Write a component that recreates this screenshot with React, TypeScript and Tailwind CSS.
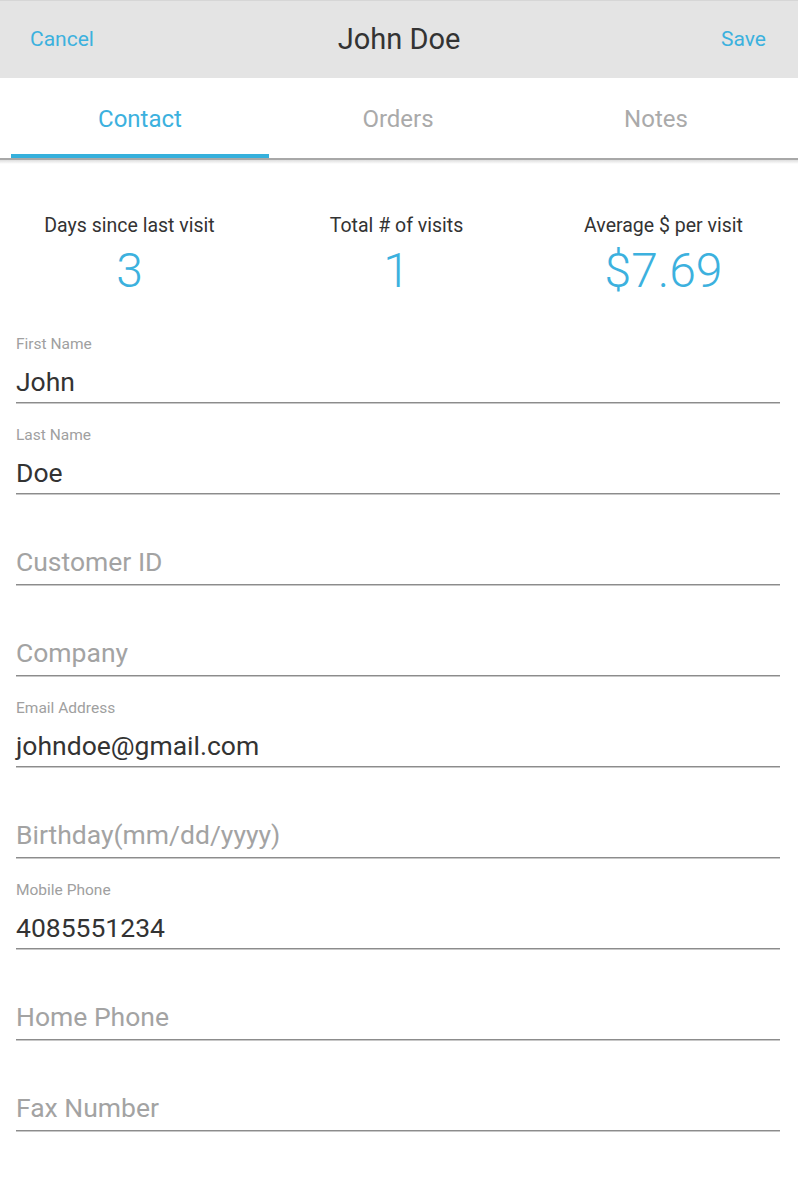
import React from "react";

const fields: { label: string; value?: string }[] = [
  { label: "First Name", value: "John" },
  { label: "Last Name", value: "Doe" },
  { label: "Customer ID" },
  { label: "Company" },
  { label: "Email Address", value: "johndoe@gmail.com" },
  { label: "Birthday(mm/dd/yyyy)" },
  { label: "Mobile Phone", value: "4085551234" },
  { label: "Home Phone" },
  { label: "Fax Number" },
];

function Field({ label, value }: { label: string; value?: string }) {
  return (
    <div className="h-[91px] flex flex-col justify-end">
      {value ? (
        <>
          <div className="text-[15.5px] leading-[18px] text-[#a0a0a0]">{label}</div>
          <div className="text-[26.5px] leading-[32px] text-[#333333] mt-[13px] mb-[4px]">{value}</div>
        </>
      ) : (
        <div className="text-[26.5px] leading-[32px] text-[#a3a3a3] mb-[6px]">{label}</div>
      )}
      <div className="h-[2px] bg-[#8c8c8c] border-b border-[#c8c8c8]" />
    </div>
  );
}

export default function App() {
  return (
    <div className="w-[798px] h-[1180px] bg-white font-['Roboto',sans-serif] overflow-hidden">
      <div className="h-[78px] bg-[#e4e4e4] border-t border-[#d6d6d6] flex items-center justify-between relative">
        <button className="pl-[30px] text-[21px] text-[#3cb1de]">Cancel</button>
        <div className="absolute left-0 right-0 text-center text-[29px] text-[#333333] pointer-events-none">John Doe</div>
        <button className="pr-[32px] text-[21px] text-[#3cb1de]">Save</button>
      </div>
      <div className="grid grid-cols-3 h-[80px] pl-[11px] pr-[13px]">
        <div className="flex flex-col">
          <div className="flex-1 flex items-center justify-center text-[24px] text-[#3cb1de] pt-[6px]">Contact</div>
          <div className="h-[4px] bg-[#35b0dc]" />
        </div>
        <div className="flex flex-col">
          <div className="flex-1 flex items-center justify-center text-[24px] text-[#aaaaaa] pt-[6px]">Orders</div>
          <div className="h-[4px]" />
        </div>
        <div className="flex flex-col">
          <div className="flex-1 flex items-center justify-center text-[24px] text-[#aaaaaa] pt-[6px]">Notes</div>
          <div className="h-[4px]" />
        </div>
      </div>
      <div className="h-[2px] bg-[#a8a8a8]" />
      <div className="h-[4px] bg-gradient-to-b from-[#dedede] to-white" />
      <div className="grid grid-cols-3 pt-[50px] w-[801px] ml-[-4px]">
        {[
          ["Days since last visit", "3"],
          ["Total # of visits", "1"],
          ["Average $ per visit", "$7.69"],
        ].map(([l, v]) => (
          <div key={l} className="flex flex-col items-center">
            <div className="text-[19.5px] leading-[24px] text-[#333333]">{l}</div>
            <div className="text-[48px] leading-[52px] font-light text-[#3cb1de] mt-[7px]">{v}</div>
          </div>
        ))}
      </div>
      <div className="pl-[16px] pr-[18px] mt-[16px]">
        {fields.map((f) => (
          <Field key={f.label} label={f.label} value={f.value} />
        ))}
      </div>
    </div>
  );
}
